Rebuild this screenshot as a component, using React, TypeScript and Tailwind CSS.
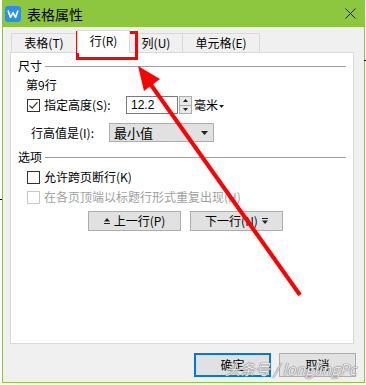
import React from 'react';

const font = { fontFamily: '"Noto Sans CJK SC", "Liberation Sans", sans-serif' };

const Check = ({ checked, disabled }: { checked?: boolean; disabled?: boolean }) => (
  <div
    className={`w-[13px] h-[13px] border bg-white flex items-center justify-center ${
      disabled ? 'border-[#c8c8c8]' : 'border-[#333333]'
    }`}
  >
    {checked && (
      <svg width="11" height="11" viewBox="0 0 11 11">
        <path d="M1.5 5.5 L4.2 8.2 L9.5 2.2" fill="none" stroke="#333" strokeWidth="1.2" />
      </svg>
    )}
  </div>
);

const Legend = ({ text }: { text: string }) => (
  <div className="flex items-center h-[14px] pr-[7px]">
    <span className="leading-[14px]">{text}</span>
    <div className="flex-1 h-px bg-[#a0a0a0] ml-[3px]" />
  </div>
);

export default function App() {
  return (
    <div className="relative w-[366px] h-[385px] bg-white overflow-hidden text-[12px] text-black" style={font}>
      <div className="ml-[2px] w-[363px] h-[383px] border-l border-r border-b border-[#8dc63f] bg-[#f0f0f0] flex flex-col">
        {/* title bar */}
        <div className="h-[27px] bg-[#8dc63f] flex items-center pl-[3px] pr-[9px] -mx-px">
          <div className="w-[16px] h-[16px] rounded-[3px] bg-[#2a8ff0] flex items-center justify-center">
            <svg width="12" height="10" viewBox="0 0 12 10">
              <path d="M1 1.5 L3.5 8.5 L6 3.5 L8.5 8.5 L11 1.5" fill="none" stroke="#fff" strokeWidth="1.6" strokeLinejoin="round" />
            </svg>
          </div>
          <span className="ml-[6px] text-[14px] leading-[16px]">表格属性</span>
          <div className="flex-1" />
          <svg width="11" height="11" viewBox="0 0 11 11">
            <path d="M0.5 0.5 L10.5 10.5 M10.5 0.5 L0.5 10.5" stroke="#111" strokeWidth="1" />
          </svg>
        </div>

        {/* tabs + panel */}
        <div className="pl-[7px] pt-[3px]">
          <div className="flex items-end h-[22px] pl-px">
            <div className="w-[66px] h-[19px] border border-b-0 border-[#d9d9d9] flex items-center justify-center leading-[14px]">表格(T)</div>
            <div className="relative z-10 w-[53px] h-[23px] -mb-px bg-white border border-b-0 border-[#d9d9d9] flex items-center justify-center leading-[14px] pb-[2px]">行(R)</div>
            <div className="w-[53px] h-[19px] border border-b-0 border-l-0 border-[#d9d9d9] flex items-center justify-center leading-[14px]">列(U)</div>
            <div className="w-[77px] h-[19px] border border-b-0 border-l-0 border-[#d9d9d9] flex items-center justify-center leading-[14px]">单元格(E)</div>
          </div>
          <div className="w-[344px] h-[292px] bg-white border border-[#d9d9d9] pl-[7px] pt-[6px] flex flex-col">
            <Legend text="尺寸" />
            <div className="mt-[5px] ml-[8px] h-[14px] leading-[14px]">第9行</div>
            <div className="mt-[4px] flex items-center h-[18px] ml-[9px]">
              <Check checked />
              <span className="ml-[4px] w-[82px] leading-[14px]">指定高度(S):</span>
              <div className="w-[52px] h-[18px] border border-[#7a7a7a] bg-white flex items-center pl-[4px] leading-[14px]" style={{ fontFamily: '"Liberation Sans", sans-serif' }}>
                12.2
              </div>
              <div className="ml-px w-[13px] h-[18px] border border-[#adadad] bg-[#e9e9e9] flex flex-col">
                <div className="flex-1 flex items-center justify-center border-b border-[#adadad]">
                  <svg width="5" height="3" viewBox="0 0 5 3"><path d="M2.5 0 L5 3 L0 3 Z" fill="#222" /></svg>
                </div>
                <div className="flex-1 flex items-center justify-center">
                  <svg width="5" height="3" viewBox="0 0 5 3"><path d="M0 0 L5 0 L2.5 3 Z" fill="#222" /></svg>
                </div>
              </div>
              <span className="ml-[2px] leading-[14px]">毫米</span>
              <svg className="ml-px mt-[2px]" width="5" height="3" viewBox="0 0 5 3"><path d="M0 0 L5 0 L2.5 3 Z" fill="#222" /></svg>
            </div>
            <div className="mt-[9px] flex items-center h-[19px] ml-[13px]">
              <span className="w-[78px] leading-[14px]">行高值是(I):</span>
              <div className="w-[105px] h-[19px] border border-[#adadad] bg-[#e1e1e1] flex items-center pl-[4px] pr-[5px]">
                <span className="flex-1 leading-[14px] text-[13px]">最小值</span>
                <svg width="7" height="4" viewBox="0 0 7 4"><path d="M0 0 L7 0 L3.5 4 Z" fill="#222" /></svg>
              </div>
            </div>
            <div className="mt-[8px]">
              <Legend text="选项" />
            </div>
            <div className="mt-[6px] flex items-center h-[14px] ml-[9px]">
              <Check />
              <span className="ml-[4px] leading-[14px]">允许跨页断行(K)</span>
            </div>
            <div className="mt-[6px] flex items-center h-[14px] ml-[9px]">
              <Check disabled />
              <span className="ml-[4px] leading-[14px] text-[#a0a0a0]">在各页顶端以标题行形式重复出现(H)</span>
            </div>
            <div className="mt-[7px] flex gap-[9px] ml-[70px]">
              <div className="w-[93px] h-[20px] border border-[#adadad] bg-[#e1e1e1] flex items-center justify-center gap-[4px]">
                <svg width="6" height="6" viewBox="0 0 6 6"><path d="M3 0 L6 3.5 L0 3.5 Z M0 5 H6 V6 H0 Z" fill="#222" /></svg>
                <span className="leading-[14px]">上一行(P)</span>
              </div>
              <div className="w-[93px] h-[20px] border border-[#adadad] bg-[#e1e1e1] flex items-center justify-center gap-[4px]">
                <span className="leading-[14px]">下一行(N)</span>
                <svg width="6" height="6" viewBox="0 0 6 6"><path d="M0 0 H6 V1 H0 Z M0 2.5 L6 2.5 L3 6 Z" fill="#222" /></svg>
              </div>
            </div>
          </div>
        </div>

        {/* footer buttons */}
        <div className="mt-[9px] flex justify-end gap-[8px] pr-[8px]">
          <div className="w-[77px] h-[24px] border-2 border-[#0078d7] bg-[#e1e1e1] flex items-center justify-center leading-[14px]">确定</div>
          <div className="w-[77px] h-[24px] border border-[#adadad] bg-[#e1e1e1] flex items-center justify-center leading-[14px]">取消</div>
        </div>
      </div>

      {/* stray ticks from the desktop behind */}
      <div className="absolute left-0 top-[199px] w-[2px] h-px bg-black" />
      <div className="absolute left-[364px] top-[60px] w-[2px] h-px bg-black" />

      {/* annotation: red box + arrow */}
      <div className="absolute left-[76px] top-[31px] w-[62px] h-[29px] border-[3px] border-[#ff0000]" />
      <svg className="absolute left-0 top-0" width="366" height="385" viewBox="0 0 366 385">
        <line x1="300" y1="295" x2="149" y2="82" stroke="#ff0000" strokeWidth="4" />
        <path d="M138 66 L160 79 L144 91 Z" fill="#ff0000" />
      </svg>

      {/* watermark */}
      <div className="absolute left-[225px] top-[360px] text-[15px] leading-[18px] italic whitespace-nowrap text-[rgba(255,255,255,0.85)] [text-shadow:0_0_1px_#808080,0_0_1px_#808080,0_0_1px_#808080]">
        头条号 / longlingPc
      </div>
    </div>
  );
}
